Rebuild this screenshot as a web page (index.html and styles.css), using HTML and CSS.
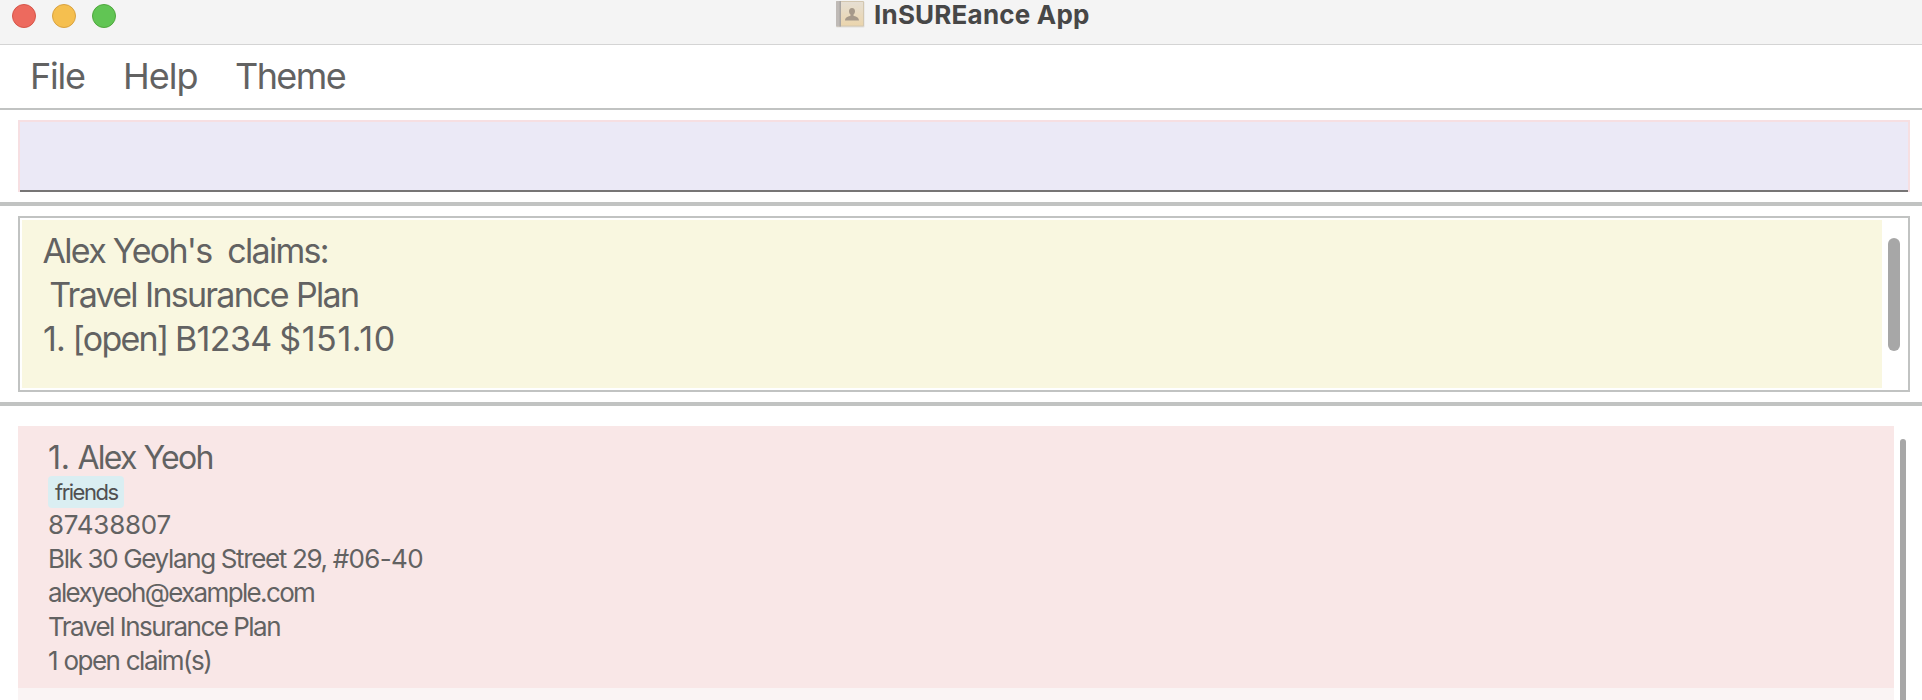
FILE: index.html
```html
<!DOCTYPE html>
<html lang="en">
<head>
<meta charset="utf-8">
<title>InSUREance App</title>
<link rel="stylesheet" href="styles.css">
</head>
<body>
<header class="titlebar">
  <div class="lights"><span class="light close"></span><span class="light minimise"></span><span class="light zoom"></span></div>
  <svg class="app-icon" width="30" height="28" viewBox="0 0 30 28">
    <defs><linearGradient id="cover" x1="0" y1="0" x2="0" y2="1"><stop offset="0" stop-color="#e6dfd3"/><stop offset="1" stop-color="#ebd5ad"/></linearGradient></defs>
    <rect x="1" y="1.500" width="28.500" height="26" rx="1" fill="#e0dedb"/>
    <rect x="1" y="1" width="28" height="25.500" rx="1" fill="#d3c7b0"/>
    <rect x="1" y="1" width="5" height="25.500" rx="1" fill="#bfbab6"/>
    <rect x="4.500" y="1" width="1.500" height="25.500" fill="#aaa6a3"/>
    <rect x="6" y="2" width="22" height="23.500" fill="url(#cover)"/>
    <path d="M17 8c-2 0-3 1.300-3 3.200 0 1.600.7 2.500 1.500 3.300v1.300c-1.500.8-5.300 1-5.500 4.700h14c-.2-3.700-4-3.900-5.500-4.700v-1.300c.8-.8 1.500-1.700 1.500-3.300C20 9.300 19 8 17 8z" fill="#a6998a"/>
  </svg>
  <h1 class="title">InSUREance App</h1>
</header>
<nav class="menubar">
  <span class="menu file">File</span>
  <span class="menu help">Help</span>
  <span class="menu theme">Theme</span>
</nav>
<section class="command"><div class="command-field"></div></section>
<section class="result">
  <div class="result-frame">
    <div class="result-text"><div class="owner">Alex Yeoh's  claims:</div><div class="policy"> Travel Insurance Plan</div><div class="claim">1. <span class="status">[open]</span> <span class="claim-id">B1234</span> <span class="amount">$151.10</span></div></div>
    <div class="result-thumb"></div>
  </div>
</section>
<main class="people">
  <div class="list">
    <article class="card">
      <h2 class="name"><span class="index">1.</span> Alex Yeoh</h2>
      <div class="tags"><span class="tag">friends</span></div>
      <p class="detail phone">87438807</p>
      <p class="detail address">Blk 30 Geylang Street 29, <span class="unit">#06-40</span></p>
      <p class="detail email">alexyeoh@example.com</p>
      <p class="detail plan">Travel Insurance Plan</p>
      <p class="detail claims">1 open claim(s)</p>
    </article>
    <div class="card-next"></div>
  </div>
  <div class="list-thumb"></div>
</main>
</body>
</html>
```
FILE: styles.css
```css
* { box-sizing: border-box; }
body {
  margin: 0;
  height: 700px;
  overflow: hidden;
  display: flex;
  flex-direction: column;
  background: #fff;
  color: #626262;
  font-family: Inter, "Liberation Sans", sans-serif;
}
h1, h2, p { margin: 0; font-weight: 400; }

.titlebar {
  flex: none;
  height: 45px;
  display: flex;
  align-items: flex-start;
  background: #f4f4f4;
  border-bottom: 1px solid #d4d4d4;
}
.lights { display: flex; gap: 16px; padding: 4px 0 0 12px; width: 835px; }
.light { width: 24px; height: 24px; border-radius: 50%; border: 1px solid; }
.close { background: #ed6a5e; border-color: #d65549; }
.minimise { background: #f5bf4f; border-color: #d9a240; }
.zoom { background: #61c554; border-color: #4fa73d; }
.app-icon { flex: none; }
.title {
  margin-left: 9px;
  font-size: 26px;
  font-weight: 700;
  line-height: 30px;
  letter-spacing: 0.2px;
  color: #474747;
  white-space: nowrap;
}

.menubar {
  flex: none;
  height: 65px;
  display: flex;
  padding-left: 30px;
  border-bottom: 2px solid #c1c3c2;
  font-size: 36px;
  line-height: 62px;
}
.menu { white-space: nowrap; }
.file { width: 93px; letter-spacing: -1.2px; }
.help { width: 112px; letter-spacing: -1px; }
.theme { letter-spacing: -1.6px; }

.command {
  flex: none;
  height: 96px;
  padding: 10px 12px 10px 18px;
  border-bottom: 4px solid #c1c3c2;
}
.command-field {
  height: 72px;
  border: 2px solid #f6dfe2;
  border-bottom: 0;
  background: linear-gradient(#777575, #777575) bottom / 100% 2px no-repeat padding-box #ebe9f6;
}

.result {
  flex: none;
  height: 200px;
  padding: 10px 12px 10px 18px;
  border-bottom: 4px solid #c1c3c2;
}
.result-frame {
  height: 176px;
  display: flex;
  gap: 6px;
  padding: 2px;
  border: 2px solid #c1c3c2;
}
.result-text {
  width: 1860px;
  padding: 9px 0 0 21px;
  background: #f9f7e0;
  font-size: 34px;
  line-height: 44px;
  white-space: pre;
}
.result-thumb { width: 12px; height: 113px; margin-top: 18px; border-radius: 6px; background: #a7a7a7; }
.owner { letter-spacing: -1.7px; margin-left: -0.5px; }
.policy { letter-spacing: -1.75px; word-spacing: 0.5px; margin-left: -2px; }
.claim { letter-spacing: -0.8px; word-spacing: -1.2px; }
.status { letter-spacing: -1.8px; }
.claim-id { letter-spacing: -0.6px; }
.amount { letter-spacing: 0.6px; }

.people { flex: 1; display: flex; gap: 6px; padding: 20px 0 0 18px; }
.list { width: 1876px; }
.list-thumb { width: 6px; height: 261px; margin-top: 13px; border-radius: 3px 3px 0 0; background: #a7a7a7; }
.card { height: 262px; padding: 10px 0 0 30px; background: #f9e7e7; }
.card-next { height: 12px; background: #faf4f4; }
.name { height: 40px; font-size: 32px; line-height: 43px; letter-spacing: -1.7px; word-spacing: 0.3px; }
.index { letter-spacing: -0.2px; }
.tags { display: flex; height: 32px; }
.tag {
  width: 76px;
  padding-left: 7px;
  border-radius: 4px;
  background: #daeef2;
  color: #505050;
  font-size: 22px;
  line-height: 32px;
  letter-spacing: -1.5px;
}
.detail { font-size: 26px; line-height: 34px; white-space: nowrap; }
.phone { letter-spacing: -0.25px; }
.address { letter-spacing: -1.35px; }
.unit { letter-spacing: -0.65px; }
.email { letter-spacing: -1.65px; }
.plan { letter-spacing: -1.5px; }
.claims { letter-spacing: -1.5px; word-spacing: 0.5px; }
```
